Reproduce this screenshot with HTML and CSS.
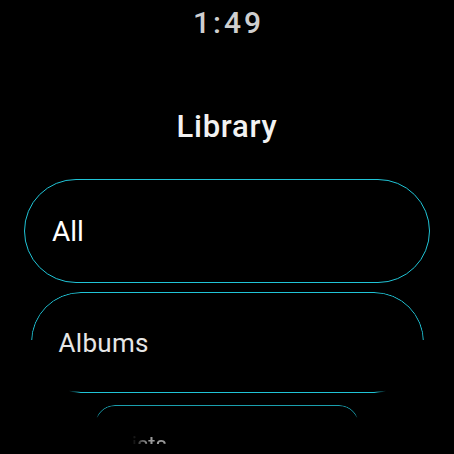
FILE: index.html
```html
<!DOCTYPE html>
<html>
<head>
<meta charset="utf-8">
<link rel="stylesheet" href="styles.css">
</head>
<body>
<div class="screen">
  <div class="time">1:49</div>
  <div class="title">Library</div>
  <div class="list">
    <div class="chip chip-all"><span class="label">All</span></div>
    <div class="chip chip-albums"><span class="label">Albums</span></div>
    <div class="chip chip-artists"><div class="peek"><span class="label">Artists</span></div></div>
  </div>
</div>
</body>
</html>
```
FILE: styles.css
```css
html, body {
  margin: 0;
  padding: 0;
  background: #000;
}
body {
  width: 454px;
  height: 454px;
  overflow: hidden;
  font-family: Roboto, "Noto Sans", sans-serif;
}
.screen {
  display: flex;
  flex-direction: column;
  align-items: center;
}
.time {
  margin-top: 5px;
  font-size: 30px;
  line-height: 36px;
  font-weight: 500;
  color: #cfcfcf;
  letter-spacing: 3px;
  padding-left: 3px;
}
.title {
  margin-top: 68px;
  font-size: 31px;
  line-height: 36px;
  font-weight: 500;
  color: #f2f2f2;
  letter-spacing: 0.8px;
}
.list {
  margin-top: 34px;
  display: flex;
  flex-direction: column;
  align-items: center;
}
.chip {
  position: relative;
  box-sizing: border-box;
  display: flex;
  align-items: center;
  padding-left: 28px;
}
.chip::before {
  content: "";
  position: absolute;
  inset: 0;
  border: 1px solid #20c4d6;
  border-radius: 52px;
}
.chip-all {
  width: 406px;
  height: 104px;
  font-size: 28px;
  color: #ffffff;
}
.chip-albums {
  margin-top: 9px;
  width: 393px;
  height: 101px;
  font-size: 26px;
  letter-spacing: 0.3px;
  color: #e6e6e6;
}
.chip-albums::before {
  border-radius: 50px;
  -webkit-mask: linear-gradient(#000, #000) top / 100% 48px no-repeat,
                linear-gradient(to right, transparent 0, #000 10px, #000 calc(100% - 10px), transparent 100%) bottom center / calc(100% - 76px) 52px no-repeat;
  mask: linear-gradient(#000, #000) top / 100% 48px no-repeat,
        linear-gradient(to right, transparent 0, #000 10px, #000 calc(100% - 10px), transparent 100%) bottom center / calc(100% - 76px) 52px no-repeat;
}
.chip-artists {
  margin-top: 12px;
  width: 264px;
  height: 48px;
  align-items: flex-start;
  padding-left: 7px;
}
.chip-artists::before {
  border-color: #1a9fae;
  border-radius: 20px;
  -webkit-mask: linear-gradient(#000 0, #000 9px, transparent 13px);
  mask: linear-gradient(#000 0, #000 9px, transparent 13px);
}
.peek {
  margin-top: 27px;
  height: 12px;
  overflow: hidden;
}
.peek .label {
  display: block;
  font-size: 22px;
  line-height: 26px;
  color: #9a9a9a;
  -webkit-mask: linear-gradient(to right, transparent 0, transparent 30px, #000 46px);
  mask: linear-gradient(to right, transparent 0, transparent 30px, #000 46px);
}
```
